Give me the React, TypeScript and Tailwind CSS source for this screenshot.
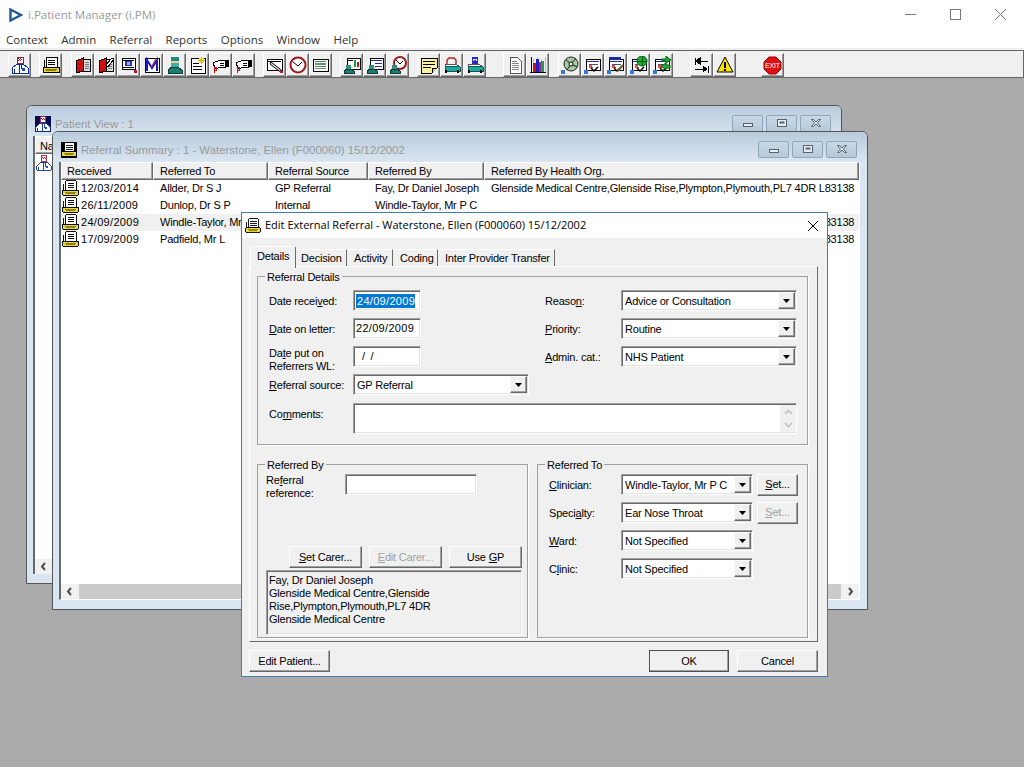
import React from 'react';

const sunken = 'border border-t-[#a0a0a0] border-l-[#a0a0a0] border-r-white border-b-white shadow-[inset_1px_1px_0_#696969,inset_-1px_-1px_0_#e3e3e3] bg-white';
const raised = 'border border-t-white border-l-white border-r-[#696969] border-b-[#696969] shadow-[inset_-1px_-1px_0_#a0a0a0] bg-[#f0f0f0]';
const frame = 'border border-[#555555] rounded-t-[6px] bg-[#d9e5f1] flex flex-col overflow-hidden';
const titleGradient = 'bg-gradient-to-b from-[#b9cbdc] to-[#d9e5f1]';

// ---- icons

const Svg = ({ children, size = 18 }: { children: React.ReactNode; size?: number }) => (
  <svg width={size} height={size} viewBox="0 0 18 18" shapeRendering="crispEdges" className="shrink-0">
    {children}
  </svg>
);

const ReferralIcon = ({ size = 18 }: { size?: number }) => (
  <Svg size={size}>
    <path d="M4 1h11v10H4z" fill="#fff" stroke="#000" />
    <path d="M6 4h7M6 6h7M6 8h7" stroke="#000" />
    <path d="M2 4v8" stroke="#000" />
    <path d="M1 11h16v5H1z" fill="#e6d54a" stroke="#000" />
    <path d="M3 13h12M4 14h10" stroke="#8a7d10" />
  </Svg>
);

const DoctorIcon = ({ size = 18 }: { size?: number }) => (
  <Svg size={size}>
    <path d="M6 1h6v6H6z" fill="#fff" stroke="#a02040" />
    <path d="M7 2h1v1H7zM9 2h1v1H9zM8 3h1v1H8zM10 3h1v1h-1zM7 4h1v1H7zM9 4h1v1H9z" fill="#c01030" />
    <path d="M1 17v-5l5-4h6l5 4v5z" fill="#fff" stroke="#0a2a9a" />
    <path d="M8 8l1 4-1 5M10 8l1 5" stroke="#0a2a9a" fill="none" />
    <path d="M11 12h3v3h-3z" fill="#1a4ad0" />
    <path d="M3 13v4" stroke="#0a2a9a" />
  </Svg>
);

const Book = ({ pen = false }: { pen?: boolean }) => (
  <Svg>
    <path d="M9 3h7v12H9z" fill="#ddd" stroke="#000" />
    <path d="M11 6h4M11 8h4M11 10h4M11 12h4" stroke="#777" />
    <path d="M2 5l7-3v13l-7 2z" fill="#d01010" stroke="#000" />
    {pen && <path d="M9 9l6-7 2 1-6 8z" fill="#fff" stroke="#000" />}
  </Svg>
);

const EyeForm = () => (
  <Svg>
    <path d="M2 2h13v11H2z" fill="#fff" stroke="#000" />
    <path d="M3 4h11M3 11h11" stroke="#000" />
    <path d="M5 5h7v5H5z" fill="#2030c0" />
    <path d="M7 6h3v3H7z" fill="#9db4f0" />
    <path d="M14 14h3v3h-3z" fill="#c01030" />
  </Svg>
);

const MIcon = () => (
  <Svg>
    <path d="M2 2h14v14H2z" fill="#fff" stroke="#000" />
    <path d="M4 15V4l5 8 5-8v11" fill="none" stroke="#1a1ac8" strokeWidth="2" shapeRendering="auto" />
    <path d="M8 12l5-10" stroke="#d01010" shapeRendering="auto" />
  </Svg>
);

const SurgeonIcon = () => (
  <Svg>
    <path d="M5 1h8v4H5z" fill="#1f8a80" />
    <path d="M5 5h8v5H5z" fill="#f0c8a0" />
    <path d="M5 7h8v4H5z" fill="#40b0a0" />
    <path d="M2 17v-3l4-3h6l4 3v3z" fill="#1f7a70" stroke="#0b3a34" />
  </Svg>
);

const StarNote = () => (
  <Svg>
    <path d="M2 2h14v15H2z" fill="#fff" stroke="#000" />
    <path d="M4 7h6M4 10h9M4 13h9" stroke="#000" />
    <path d="M10 2h5v5h-5z" fill="#f0e040" />
    <path d="M12 1h1v7h-1zM9 4h7v1H9z" fill="#e0b010" />
  </Svg>
);

const HandIcon = () => (
  <Svg>
    <path d="M1 7l7-3h5v7H8l-2 1H3z" fill="#fff" stroke="#000" />
    <path d="M13 4h4v7h-4z" fill="#000" />
    <path d="M8 7h4M8 9h4" stroke="#000" />
    <path d="M2 11v6M2 11h2v3H2" stroke="#d01010" fill="none" />
  </Svg>
);

const PencilForm = () => (
  <Svg>
    <path d="M1 3h15v11H1z" fill="#fff" stroke="#000" />
    <path d="M2 5h13" stroke="#000" />
    <path d="M5 6l9 7 2 3-3-1-9-7z" fill="#d8d8d8" stroke="#000" shapeRendering="auto" />
    <path d="M14 15h3v2h-3z" fill="#c01030" />
  </Svg>
);

const ClockIcon = () => (
  <Svg>
    <circle cx="9" cy="9" r="7.5" fill="#fff" stroke="#a01818" strokeWidth="2" shapeRendering="auto" />
    <path d="M4 6l5 4 4-4" fill="none" stroke="#000" shapeRendering="auto" />
  </Svg>
);

const ListIcon = () => (
  <Svg>
    <path d="M1 3h15v12H1z" fill="#fff" stroke="#000" />
    <path d="M3 5h11v1H3z" fill="#20a040" />
    <path d="M3 7h11v2H3z" fill="#808080" />
    <path d="M3 10h11v1H3z" fill="#20a040" />
    <path d="M3 12h11v1H3z" fill="#808080" />
  </Svg>
);

const PersonBase = () => (
  <>
    <path d="M3 12h7v-1H3z" fill="#f0c8a0" />
    <path d="M3 9h5v4H3z" fill="#2f8f80" />
    <path d="M1 17v-2l3-2h4l3 2v2z" fill="#1f7a70" stroke="#0b3a34" />
  </>
);

const PersonChart = () => (
  <Svg>
    <path d="M4 2h13v11H4z" fill="#fff" stroke="#000" />
    <path d="M11 4h2v7h-2z" fill="#20a040" />
    <path d="M14 6h2v5h-2z" fill="#d01010" />
    <path d="M5 4h5v1H5z" fill="#000" />
    <PersonBase />
  </Svg>
);

const PersonForm = () => (
  <Svg>
    <path d="M4 2h13v11H4z" fill="#fff" stroke="#000" />
    <path d="M5 4h11M9 7h7M9 10h7" stroke="#2030a0" />
    <PersonBase />
  </Svg>
);

const PersonClock = () => (
  <Svg>
    <circle cx="11" cy="7" r="6" fill="#fff" stroke="#a01818" strokeWidth="2" shapeRendering="auto" />
    <path d="M7 4l4 4 3-3" fill="none" stroke="#000" shapeRendering="auto" />
    <PersonBase />
  </Svg>
);

const YellowNote = () => (
  <Svg>
    <path d="M1 2h16v10l-5 5H1z" fill="#fbf39a" stroke="#000" />
    <path d="M3 5h12M3 8h12M3 11h8" stroke="#000" />
    <path d="M12 17v-5h5" fill="#d8c850" stroke="#000" />
  </Svg>
);

const BedIcon = ({ person = false }: { person?: boolean }) => (
  <Svg>
    <path d="M2 8h11l4 3H3z" fill="#fff" stroke="#555" />
    <path d="M2 10h12l3 1v4H2z" fill="#20a8a0" stroke="#0b5a54" />
    <path d="M3 14v3M15 14v3" stroke="#000" strokeWidth="2" />
    {person ? (
      <>
        <path d="M6 1h6v7H6z" fill="#2030c0" />
        <path d="M7 3h4v2H7z" fill="#e0e0f0" />
        <path d="M8 4h2v1H8z" fill="#c01030" />
      </>
    ) : (
      <path d="M4 8V4l2-2h5l2 2v4" fill="none" stroke="#b02020" strokeWidth="1.4" shapeRendering="auto" />
    )}
  </Svg>
);

const DocIcon = () => (
  <Svg>
    <path d="M4 1h7l4 4v12H4z" fill="#fff" stroke="#555" />
    <path d="M6 5h5M6 7h7M6 9h7M6 11h7M6 13h7" stroke="#888" />
  </Svg>
);

const BarChart = () => (
  <Svg>
    <path d="M1 16h16M2 1v16" stroke="#000" />
    <path d="M4 3v13M8 1v15M12 3v13M16 1v15" stroke="#bbb" />
    <path d="M4 7h3v9H4z" fill="#d01010" />
    <path d="M7 3h3v13H7z" fill="#2020c0" />
    <path d="M10 6h2v10h-2z" fill="#a020a0" />
    <path d="M12 5h3v11h-3z" fill="#20a040" />
  </Svg>
);

const Corner = () => <path d="M0 14h4v4H0z" fill="#3a78d8" />;

const DiscIcon = () => (
  <Svg>
    <circle cx="10" cy="8" r="7" fill="#a8c8a0" stroke="#222" shapeRendering="auto" />
    <path d="M10 8L15 2M10 8l6 3M10 8l-4 6M10 8L5 4" stroke="#222" shapeRendering="auto" />
    <circle cx="10" cy="8" r="2" fill="#fff" stroke="#000" shapeRendering="auto" />
    <Corner />
  </Svg>
);

const FormBase = () => (
  <>
    <path d="M2 3h14v11H2z" fill="#fff" stroke="#000" />
    <path d="M3 5h12" stroke="#2030a0" />
    <path d="M5 8h9M5 11h4" stroke="#555" />
    <path d="M5 9h3v3H5z" fill="#e05050" />
    <path d="M7 12l3 3 4-4" fill="none" stroke="#000" strokeWidth="1.5" shapeRendering="auto" />
    <Corner />
  </>
);

const FormIcon = () => (
  <Svg>
    <FormBase />
  </Svg>
);

const FormTick = () => (
  <Svg>
    <FormBase />
    <path d="M2 1h12v3H2z" fill="#1a2a9a" />
    <path d="M11 15l5-6" stroke="#6a6a20" strokeWidth="2" shapeRendering="auto" />
  </Svg>
);

const FormGlobe = () => (
  <Svg>
    <FormBase />
    <circle cx="12" cy="5" r="5" fill="#18b030" stroke="#0a6018" shapeRendering="auto" />
    <path d="M12 0v10M7 5h10" stroke="#0a6018" />
  </Svg>
);

const FormArrows = () => (
  <Svg>
    <FormBase />
    <path d="M9 3h4V0l5 4-5 3V5H9z" fill="#18b030" stroke="#0a6018" shapeRendering="auto" />
    <path d="M17 9h-4V7l-5 3 5 4v-2h4z" fill="#18b030" stroke="#0a6018" shapeRendering="auto" />
  </Svg>
);

const SwapIcon = () => (
  <Svg>
    <path d="M2 2v7M3 5h12M3 5l4-3v6z" stroke="#000" fill="#000" />
    <path d="M15 10v7M2 13h12M14 13l-4-3v6z" stroke="#000" fill="#000" />
  </Svg>
);

const WarningIcon = () => (
  <Svg>
    <path d="M9 1l8 15H1z" fill="#fce100" stroke="#000" shapeRendering="auto" />
    <path d="M8 6h2v6H8zM8 13h2v2H8z" fill="#000" />
  </Svg>
);

const ExitIcon = () => (
  <svg width="19" height="19" viewBox="0 0 19 19" className="shrink-0">
    <path d="M6 1h7l5 5v7l-5 5H6l-5-5V6z" fill="#e01010" stroke="#a00000" />
    <text x="9.5" y="12" textAnchor="middle" fill="#fff" fontSize="7" fontFamily="Liberation Sans, sans-serif">
      EXIT
    </text>
  </svg>
);

const toolbar: { gap: string; icons: React.ReactNode[] }[] = [
  { gap: 'ml-0', icons: [<DoctorIcon />] },
  { gap: 'ml-[8px]', icons: [<ReferralIcon />] },
  { gap: 'ml-[9px]', icons: [<Book />, <Book pen />, <EyeForm />, <MIcon />, <SurgeonIcon />, <StarNote />, <HandIcon />, <HandIcon />] },
  { gap: 'ml-[8px]', icons: [<PencilForm />, <ClockIcon />, <ListIcon />] },
  { gap: 'ml-[8px]', icons: [<PersonChart />, <PersonForm />, <PersonClock />] },
  { gap: 'ml-[8px]', icons: [<YellowNote />, <BedIcon />, <BedIcon person />] },
  { gap: 'ml-[17px]', icons: [<DocIcon />, <BarChart />] },
  { gap: 'ml-[9px]', icons: [<DiscIcon />, <FormIcon />, <FormTick />, <FormGlobe />, <FormArrows />] },
  { gap: 'ml-[17px]', icons: [<SwapIcon />, <WarningIcon />] },
  { gap: 'ml-[25px]', icons: [<ExitIcon />] },
];

// ---- small widgets

const Mn = ({ children }: { children: React.ReactNode }) => <span className="underline">{children}</span>;

const Arrow = () => (
  <svg width="7" height="4" viewBox="0 0 7 4">
    <path d="M0 0h7L3.5 4z" fill="#000" />
  </svg>
);

const Combo = ({ value, width }: { value: string; width: string }) => (
  <div className={`${sunken} ${width} h-[21px] flex items-center pl-[3px] pr-[1px] shrink-0`}>
    <span className="flex-1 whitespace-nowrap pt-[1px]">{value}</span>
    <div className={`${raised} w-[17px] h-[17px] flex items-center justify-center shrink-0`}>
      <Arrow />
    </div>
  </div>
);

const Btn = ({ children, width, disabled, strong }: { children: React.ReactNode; width: string; disabled?: boolean; strong?: boolean }) => (
  <button
    className={`${raised} ${width} h-[22px] flex items-center justify-center shrink-0 ${disabled ? 'text-[#a0a0a0]' : 'text-black'} ${
      strong ? 'outline outline-1 outline-[#505050] -outline-offset-1' : ''
    }`}
  >
    <span>{children}</span>
  </button>
);

const Caption = ({ kind }: { kind: 'min' | 'max' | 'close' }) => (
  <div className="w-[31px] h-[17px] border border-[#8fa6bb] rounded-[2px] flex items-center justify-center bg-gradient-to-b from-[#c9d8e6] to-[#b7c9da]">
    <svg width="12" height="10" viewBox="0 0 12 10">
      {kind === 'min' && <rect x="1.5" y="5.5" width="9" height="3" fill="#e8eef4" stroke="#55616e" />}
      {kind === 'max' && (
        <>
          <rect x="1.5" y="1.5" width="9" height="7" fill="#e8eef4" stroke="#55616e" />
          <rect x="3.5" y="3.5" width="5" height="2" fill="#55616e" />
        </>
      )}
      {kind === 'close' && <path d="M1.5 1.5h2L6 4l2.5-2.5h2L7.5 5l3 3.5h-2L6 6 3.5 8.5h-2L4.5 5z" fill="#e8eef4" stroke="#55616e" />}
    </svg>
  </div>
);

const Captions = () => (
  <div className="flex gap-[3px] ml-auto mr-[10px] -mt-[2px]">
    <Caption kind="min" />
    <Caption kind="max" />
    <Caption kind="close" />
  </div>
);

const ScrollBar = ({ rightArrow }: { rightArrow: boolean }) => (
  <div className="h-[15px] flex bg-[#cbcbcb] shrink-0">
    <div className="w-[18px] bg-[#f0f0f0] flex items-center justify-center">
      <svg width="8" height="9" viewBox="0 0 8 9">
        <path d="M5 1L2 4.5 5 8" fill="none" stroke="#505050" strokeWidth="2" />
      </svg>
    </div>
    <div className="flex-1" />
    {rightArrow && (
      <div className="w-[18px] bg-[#f0f0f0] flex items-center justify-center">
        <svg width="8" height="9" viewBox="0 0 8 9">
          <path d="M3 1l3 3.5L3 8" fill="none" stroke="#505050" strokeWidth="2" />
        </svg>
      </div>
    )}
  </div>
);

const org = 'Glenside Medical Centre,Glenside Rise,Plympton,Plymouth,PL7 4DR L83138';
const rows = [
  { date: '12/03/2014', to: 'Allder, Dr S J', source: 'GP Referral', by: 'Fay, Dr Daniel Joseph', org },
  { date: '26/11/2009', to: 'Dunlop, Dr S P', source: 'Internal', by: 'Windle-Taylor, Mr P C', org: '' },
  { date: '24/09/2009', to: 'Windle-Taylor, Mr P C', source: 'GP Referral', by: 'Fay, Dr Daniel Joseph', org },
  { date: '17/09/2009', to: 'Padfield, Mr L', source: 'GP Referral', by: 'Fay, Dr Daniel Joseph', org },
];

const columns = [
  { label: 'Received', w: 'w-[92px] pl-[5px]' },
  { label: 'Referred To', w: 'w-[115px] pl-[6px]' },
  { label: 'Referral Source', w: 'w-[100px] pl-[6px]' },
  { label: 'Referred By', w: 'w-[116px] pl-[6px]' },
  { label: 'Referred By Health Org.', w: 'flex-1 pl-[6px]' },
];

const tabs = [
  { label: 'Decision', w: 'w-[51px] pl-[5px]' },
  { label: 'Activity', w: 'w-[46px] pl-[7px]' },
  { label: 'Coding', w: 'w-[45px] pl-[7px]' },
  { label: 'Inter Provider Transfer', w: 'w-[117px] pl-[7px]' },
];

const Group = ({ legend, className, inner, children }: { legend: string; className: string; inner: string; children: React.ReactNode }) => (
  <fieldset className={`border border-[#a0a0a0] shadow-[1px_1px_0_#fff] ${className}`}>
    <legend className="ml-[7px] px-[2px] pt-[1px] leading-[14px] h-[14px]">{legend}</legend>
    <div className={inner}>{children}</div>
  </fieldset>
);

const FieldRow = ({ label, children }: { label: React.ReactNode; children: React.ReactNode }) => (
  <div className="flex items-center h-[21px] mb-[7px]">
    <div className="w-[84px] shrink-0 whitespace-nowrap pt-[1px]">{label}</div>
    {children}
  </div>
);

const RightRow = ({ label, children, labelW }: { label: React.ReactNode; children: React.ReactNode; labelW: string }) => (
  <div className="flex items-center h-[21px] mb-[7px]">
    <div className={`${labelW} shrink-0 pt-[1px]`}>{label}</div>
    {children}
  </div>
);

function EditDialog() {
  return (
    <div className="absolute left-[241px] top-[212px] w-[587px] h-[465px] border border-[#3f7fae] bg-[#f0f0f0] flex flex-col">
      <div className="h-[25px] bg-white flex items-center pl-[3px] pr-[8px] shrink-0">
        <ReferralIcon size={16} />
        <span className="ml-[4px] -mt-[1px] font-['Open_Sans',sans-serif] text-[11px] tracking-normal">Edit External Referral - Waterstone, Ellen (F000060) 15/12/2002</span>
        <svg width="12" height="12" viewBox="0 0 12 12" className="ml-auto">
          <path d="M1 1l10 10M11 1L1 11" stroke="#000" />
        </svg>
      </div>

      <div className="flex-1 flex flex-col pl-[7px] pr-[9px] pt-[8px]">
        {/* tabs */}
        <div className="h-[20px] flex items-end pl-[1px] shrink-0">
          <div className="relative z-10 w-[46px] h-[22px] -mb-[2px] border-t border-l border-t-white border-l-white border-r border-r-[#696969] bg-[#f0f0f0] pl-[6px] pt-[1px] rounded-t-[2px]">
            Details
          </div>
          {tabs.map(t => (
            <div key={t.label} className={`${t.w} h-[17px] border-t border-t-white border-r border-r-[#696969] leading-[17px] whitespace-nowrap`}>
              {t.label}
            </div>
          ))}
        </div>

        {/* tab page */}
        <div className="h-[376px] border border-t-white border-l-white border-r-[#696969] border-b-[#696969] pl-[7px] pr-[9px] pt-[2px] flex flex-col shrink-0">
          <Group legend="Referral Details" className="h-[176px] shrink-0" inner="pl-[11px]">
            <div className="flex pt-[7px]">
              <div className="w-[276px] shrink-0">
                <FieldRow label={<>Date recei<Mn>v</Mn>ed:</>}>
                  <div className={`${sunken} w-[68px] h-[21px] flex items-center pl-[2px] tracking-[0.3px]`}>
                    <span className="bg-[#0078d7] text-white leading-[14px] pl-[1px]">24/09/2009</span>
                  </div>
                </FieldRow>
                <FieldRow label={<><Mn>D</Mn>ate on letter:</>}>
                  <div className={`${sunken} w-[68px] h-[21px] flex items-center pl-[2px] tracking-[0.3px]`}>22/09/2009</div>
                </FieldRow>
                <FieldRow label={<div className="leading-[13px] pt-[6px]">Da<Mn>t</Mn>e put on<br />Referrers WL:</div>}>
                  <div className={`${sunken} w-[68px] h-[21px] flex items-center pl-[8px]`}>/&nbsp;&nbsp;/</div>
                </FieldRow>
                <FieldRow label={<><Mn>R</Mn>eferral source:</>}>
                  <Combo value="GP Referral" width="w-[176px]" />
                </FieldRow>
              </div>
              <div>
                <RightRow labelW="w-[76px]" label={<>Reaso<Mn>n</Mn>:</>}>
                  <Combo value="Advice or Consultation" width="w-[176px]" />
                </RightRow>
                <RightRow labelW="w-[76px]" label={<><Mn>P</Mn>riority:</>}>
                  <Combo value="Routine" width="w-[176px]" />
                </RightRow>
                <RightRow labelW="w-[76px]" label={<><Mn>A</Mn>dmin. cat.:</>}>
                  <Combo value="NHS Patient" width="w-[176px]" />
                </RightRow>
              </div>
            </div>
            <div className="flex mt-[1px]">
              <div className="w-[84px] h-[21px] flex items-center shrink-0 pt-[1px]">Co<Mn>m</Mn>ments:</div>
              <div className={`${sunken} w-[444px] h-[31px] flex justify-end`}>
                <div className="w-[16px] flex flex-col items-center justify-between py-[4px] bg-[#f0f0f0] my-[1px]">
                  <svg width="9" height="6" viewBox="0 0 9 6"><path d="M1 5l3.5-3.5L8 5" fill="none" stroke="#c0c0c0" strokeWidth="1.6" /></svg>
                  <svg width="9" height="6" viewBox="0 0 9 6"><path d="M1 1l3.5 3.5L8 1" fill="none" stroke="#c0c0c0" strokeWidth="1.6" /></svg>
                </div>
              </div>
            </div>
          </Group>

          <div className="flex gap-[9px] mt-[12px]">
            <Group legend="Referred By" className="w-[271px] h-[181px]" inner="pl-[8px] pr-[5px] flex flex-col">
              <div className="flex pt-[3px]">
                <div className="w-[79px] leading-[13px] shrink-0">
                  Re<Mn>f</Mn>erral<br />reference:
                </div>
                <div className={`${sunken} w-[132px] h-[21px]`} />
              </div>
              <div className="flex justify-end gap-[7px] mt-[46px]">
                <Btn width="w-[73px]"><Mn>S</Mn>et Carer...</Btn>
                <Btn width="w-[73px]" disabled><Mn>E</Mn>dit Carer...</Btn>
                <Btn width="w-[73px]">Use <Mn>G</Mn>P</Btn>
              </div>
              <div className={`${sunken} !bg-[#f0f0f0] h-[65px] w-[256px] mt-[2px] px-[2px] pt-[3px] leading-[13px]`}>
                Fay, Dr Daniel Joseph
                <br />
                Glenside Medical Centre,Glenside
                <br />
                Rise,Plympton,Plymouth,PL7 4DR
                <br />
                Glenside Medical Centre
              </div>
            </Group>

            <Group legend="Referred To" className="w-[271px] h-[181px]" inner="pl-[11px] pt-[3px]">
              <RightRow labelW="w-[72px]" label={<><Mn>C</Mn>linician:</>}>
                <Combo value="Windle-Taylor, Mr P C" width="w-[132px]" />
                <div className="ml-[4px]"><Btn width="w-[41px]"><Mn>S</Mn>et...</Btn></div>
              </RightRow>
              <RightRow labelW="w-[72px]" label={<>Speci<Mn>a</Mn>lty:</>}>
                <Combo value="Ear Nose Throat" width="w-[132px]" />
                <div className="ml-[4px]"><Btn width="w-[41px]" disabled><Mn>S</Mn>et...</Btn></div>
              </RightRow>
              <RightRow labelW="w-[72px]" label={<><Mn>W</Mn>ard:</>}>
                <Combo value="Not Specified" width="w-[132px]" />
              </RightRow>
              <RightRow labelW="w-[72px]" label={<>C<Mn>l</Mn>inic:</>}>
                <Combo value="Not Specified" width="w-[132px]" />
              </RightRow>
            </Group>
          </div>
        </div>

        {/* footer */}
        <div className="flex pt-[8px]">
          <Btn width="w-[81px]">Edit Patient...</Btn>
          <div className="ml-auto flex gap-[8px]">
            <Btn width="w-[80px]" strong>OK</Btn>
            <Btn width="w-[81px]">Cancel</Btn>
          </div>
        </div>
      </div>
    </div>
  );
}

export default function App() {
  return (
    <div className="relative w-[1024px] h-[768px] overflow-hidden bg-[#ababab] border-b border-b-white font-['Liberation_Sans',sans-serif] text-[11px] tracking-[-0.2px] text-black">
      {/* app title bar */}
      <div className="h-[30px] bg-white flex items-center pl-[9px] tracking-normal">
        <svg width="14" height="14" viewBox="0 0 14 14">
          <path d="M1.5 1.5L12 7 1.5 12.5z" fill="none" stroke="#1f5a96" strokeWidth="2.4" />
        </svg>
        <span className="ml-[5px] text-[#999999] font-['Open_Sans',sans-serif] text-[11.5px]">i.Patient Manager (i.PM)</span>
        <div className="ml-auto flex items-center">
          <svg width="45" height="30" viewBox="0 0 45 30"><path d="M10 14.5h11" stroke="#777" /></svg>
          <svg width="45" height="30" viewBox="0 0 45 30"><rect x="10.5" y="9.5" width="10" height="10" fill="none" stroke="#777" /></svg>
          <svg width="39" height="30" viewBox="0 0 39 30"><path d="M10 9l11 11M21 9L10 20" stroke="#777" /></svg>
        </div>
      </div>

      {/* menu */}
      <div className="h-[20px] bg-white border-b-2 border-b-[#f0f0f0] pt-[2px] flex items-center pl-[6px] gap-[13.4px] font-['Open_Sans',sans-serif] text-[11.5px] tracking-normal text-[#333333]">
        {['Context', 'Admin', 'Referral', 'Reports', 'Options', 'Window', 'Help'].map(m => (
          <span key={m}>{m}</span>
        ))}
      </div>

      {/* toolbar */}
      <div className="h-[28px] bg-[#f0f0f0] border-t border-r border-b border-[#666666] flex items-start pl-[8px] pt-[2px]">
        {toolbar.map((group, i) => (
          <div key={i} className={`flex ${group.gap}`}>
            {group.icons.map((icon, j) => (
              <div key={j} className={`${raised} w-[23px] h-[24px] flex items-center justify-center`}>
                {icon}
              </div>
            ))}
          </div>
        ))}
      </div>

      {/* Patient View window */}
      <div className={`${frame} absolute left-[26px] top-[105px] w-[816px] h-[479px]`}>
        <div className={`${titleGradient} h-[30px] flex items-center pl-[8px] pt-[6px] shrink-0`}>
          <div className="bg-[#0a0a50]">
            <DoctorIcon size={16} />
          </div>
          <span className="ml-[4px] mt-[2px] text-[#999999] text-[11.4px] tracking-normal">Patient View : 1</span>
          <Captions />
        </div>
        <div className="flex-1 ml-[6px] mr-[7px] mb-[9px] bg-white flex flex-col border-l-2 border-l-[#696969]">
          <div className={`${raised} w-[60px] h-[18px] pl-[4px] leading-[18px]`}>Name</div>
          <div className="flex-1 pl-[1px] pt-[1px]">
            <DoctorIcon size={16} />
          </div>
          <ScrollBar rightArrow={false} />
        </div>
      </div>

      {/* Referral Summary window */}
      <div className={`${frame} absolute left-[52px] top-[131px] w-[816px] h-[479px]`}>
        <div className={`${titleGradient} h-[30px] flex items-center pl-[8px] pt-[6px] shrink-0`}>
          <div className="bg-black">
            <ReferralIcon size={16} />
          </div>
          <span className="ml-[4px] mt-[2px] text-[#999999] text-[11.4px] tracking-normal">Referral Summary : 1 - Waterstone, Ellen (F000060) 15/12/2002</span>
          <Captions />
        </div>
        <div className="flex-1 ml-[6px] mr-[7px] mb-[9px] bg-white flex flex-col border-l-2 border-l-[#696969] border-r border-r-white border-b border-b-white">
          <div className="flex h-[18px] shrink-0">
            {columns.map(c => (
              <div key={c.label} className={`${raised} ${c.w} leading-[17px]`}>
                {c.label}
              </div>
            ))}
          </div>
          <div className="flex-1">
            {rows.map((r, i) => (
              <div key={r.date} className={`flex h-[17px] items-center whitespace-nowrap ${i === 2 ? 'bg-[#f0f0f0]' : ''}`}>
                <div className="w-[92px] shrink-0 flex items-center pl-[1px] gap-[2px] tracking-[0.3px]">
                  <ReferralIcon size={17} />
                  {r.date}
                </div>
                <div className="w-[115px] shrink-0 pl-[7px]">{r.to}</div>
                <div className="w-[100px] shrink-0 pl-[7px]">{r.source}</div>
                <div className="w-[116px] shrink-0 pl-[7px]">{r.by}</div>
                <div className="pl-[7px]">{r.org}</div>
              </div>
            ))}
          </div>
          <ScrollBar rightArrow />
        </div>
      </div>

      <EditDialog />
    </div>
  );
}
